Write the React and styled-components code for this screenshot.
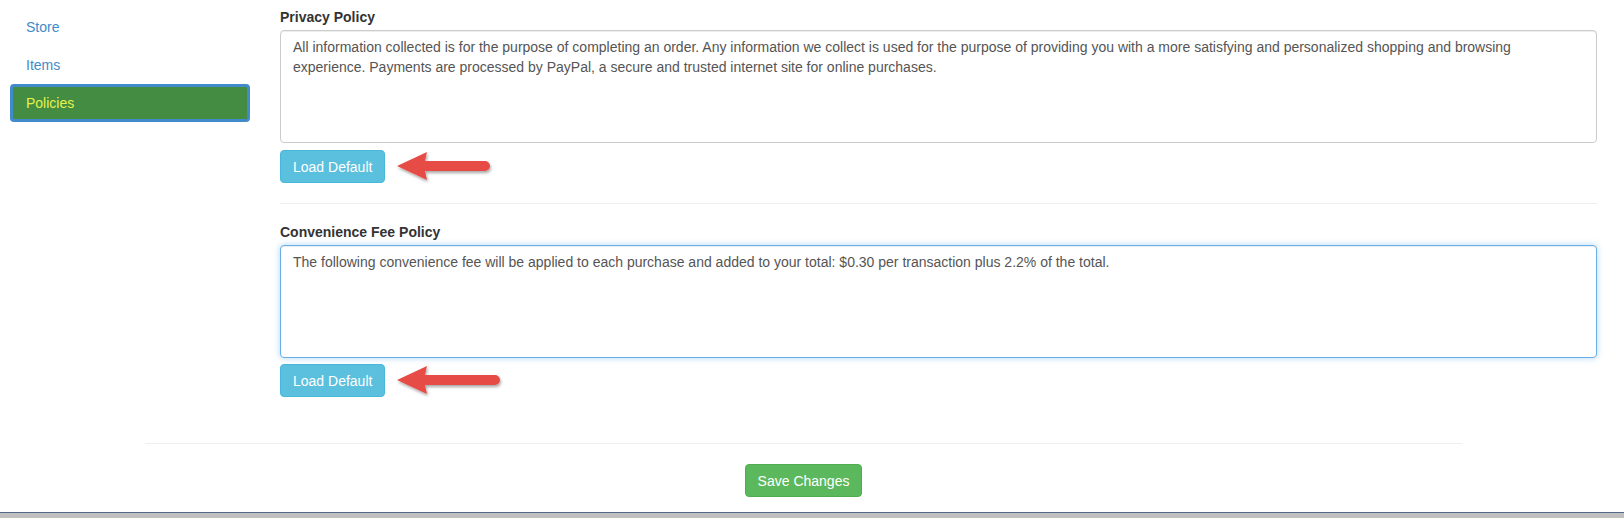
import styled, { createGlobalStyle } from "styled-components";

const GlobalStyle = createGlobalStyle`
  body {
    margin: 0;
    background: #ffffff;
    font-family: "Liberation Sans", Arial, Helvetica, sans-serif;
    font-size: 14px;
    line-height: 20px;
    color: #333333;
    overflow: hidden;
  }
`;

const Page = styled.div`
  width: 1608px;
  height: 518px;
  display: flex;
  flex-direction: column;
`;

const Row = styled.div`
  display: flex;
`;

const Sidebar = styled.nav`
  width: 240px;
  margin-left: 10px;
  padding-top: 8px;
  display: flex;
  flex-direction: column;
`;

const NavItem = styled.a`
  height: 38px;
  box-sizing: border-box;
  display: flex;
  align-items: center;
  padding-left: ${(props) => (props.active ? "13px" : "16px")};
  color: ${(props) => (props.active ? "#e6f24c" : "#428bca")};
  background: ${(props) => (props.active ? "#438c42" : "transparent")};
  border: ${(props) => (props.active ? "3px solid #428bca" : "none")};
  border-radius: 4px;
  text-decoration: none;
  cursor: pointer;
`;

const Main = styled.main`
  margin-left: 30px;
  width: 1317px;
  padding-top: 7px;
`;

const Label = styled.label`
  display: block;
  font-weight: bold;
  line-height: 20px;
  margin-bottom: 3px;
`;

const TextArea = styled.textarea`
  display: block;
  width: 100%;
  height: 113px;
  box-sizing: border-box;
  padding: 6px 12px;
  font-family: inherit;
  font-size: 14px;
  line-height: 20px;
  color: #555555;
  border: 1px solid ${(props) => (props.focused ? "#66afe9" : "#cccccc")};
  border-radius: 4px;
  box-shadow: ${(props) =>
    props.focused
      ? "inset 0 1px 1px rgba(0,0,0,.075), 0 0 6px rgba(102,175,233,.5)"
      : "inset 0 1px 1px rgba(0,0,0,.075)"};
  resize: none;
  outline: none;
`;

const ButtonRow = styled.div`
  display: flex;
  align-items: center;
  height: 33px;
  margin-top: ${(props) => props.gap || 7}px;
`;

const Button = styled.button`
  height: 33px;
  padding: 0 12px;
  font-family: inherit;
  font-size: 14px;
  color: #ffffff;
  background: ${(props) => (props.variant === "success" ? "#5cb85c" : "#5bc0de")};
  border: 1px solid ${(props) => (props.variant === "success" ? "#4cae4c" : "#46b8da")};
  border-radius: 4px;
  cursor: pointer;
`;

const ArrowSvg = styled.svg`
  flex: none;
  margin: -2px 0 -1px 10px;
  overflow: visible;
`;

const Divider = styled.hr`
  border: 0;
  border-top: 1px solid #eeeeee;
  margin: 20px 0 18px;
`;

const Footer = styled.div`
  width: 1317px;
  margin-left: 145px;
  margin-top: 46px;
  display: flex;
  flex-direction: column;
  align-items: center;
`;

const FooterRule = styled.div`
  width: 100%;
  border-top: 1px solid #eeeeee;
  margin-bottom: 20px;
`;

const BottomBar = styled.div`
  margin-top: auto;
  width: 1624px;
  height: 5px;
  background: #c0c0c0;
  border-top: 1px solid #54698a;
`;

// red callout arrow pointing left at the button; `length` = x of the shaft's end
const Pointer = ({ length = 90 }) => (
  <ArrowSvg width={length + 10} height="36" viewBox={`0 0 ${length + 10} 36`}>
    <defs>
      <filter id="arrowShadow" x="-10%" y="-20%" width="130%" height="160%">
        <feDropShadow dx="1" dy="2" stdDeviation="1.4" floodColor="#000" floodOpacity="0.35" />
      </filter>
    </defs>
    <path
      d={`M2 18 L32 4 L30 13 L${length} 13 A5 5 0 0 1 ${length} 23 L30 23 L32 32 Z`}
      fill="#e74c45"
      filter="url(#arrowShadow)"
    />
  </ArrowSvg>
);

const privacyText =
  "All information collected is for the purpose of completing an order. Any information we collect is used for the purpose of providing you with a more satisfying and personalized shopping and browsing experience. Payments are processed by PayPal, a secure and trusted internet site for online purchases.";

const feeText =
  "The following convenience fee will be applied to each purchase and added to your total: $0.30 per transaction plus 2.2% of the total.";

export default function App() {
  return (
    <Page>
      <GlobalStyle />
      <Row>
        <Sidebar>
          <NavItem>Store</NavItem>
          <NavItem>Items</NavItem>
          <NavItem active>Policies</NavItem>
        </Sidebar>
        <Main>
          <Label>Privacy Policy</Label>
          <TextArea defaultValue={privacyText} />
          <ButtonRow>
            <Button>Load Default</Button>
            <Pointer length={90} />
          </ButtonRow>
          <Divider />
          <Label>Convenience Fee Policy</Label>
          <TextArea focused defaultValue={feeText} />
          <ButtonRow gap={6}>
            <Button>Load Default</Button>
            <Pointer length={100} />
          </ButtonRow>
        </Main>
      </Row>
      <Footer>
        <FooterRule />
        <Button variant="success">Save Changes</Button>
      </Footer>
      <BottomBar />
    </Page>
  );
}
